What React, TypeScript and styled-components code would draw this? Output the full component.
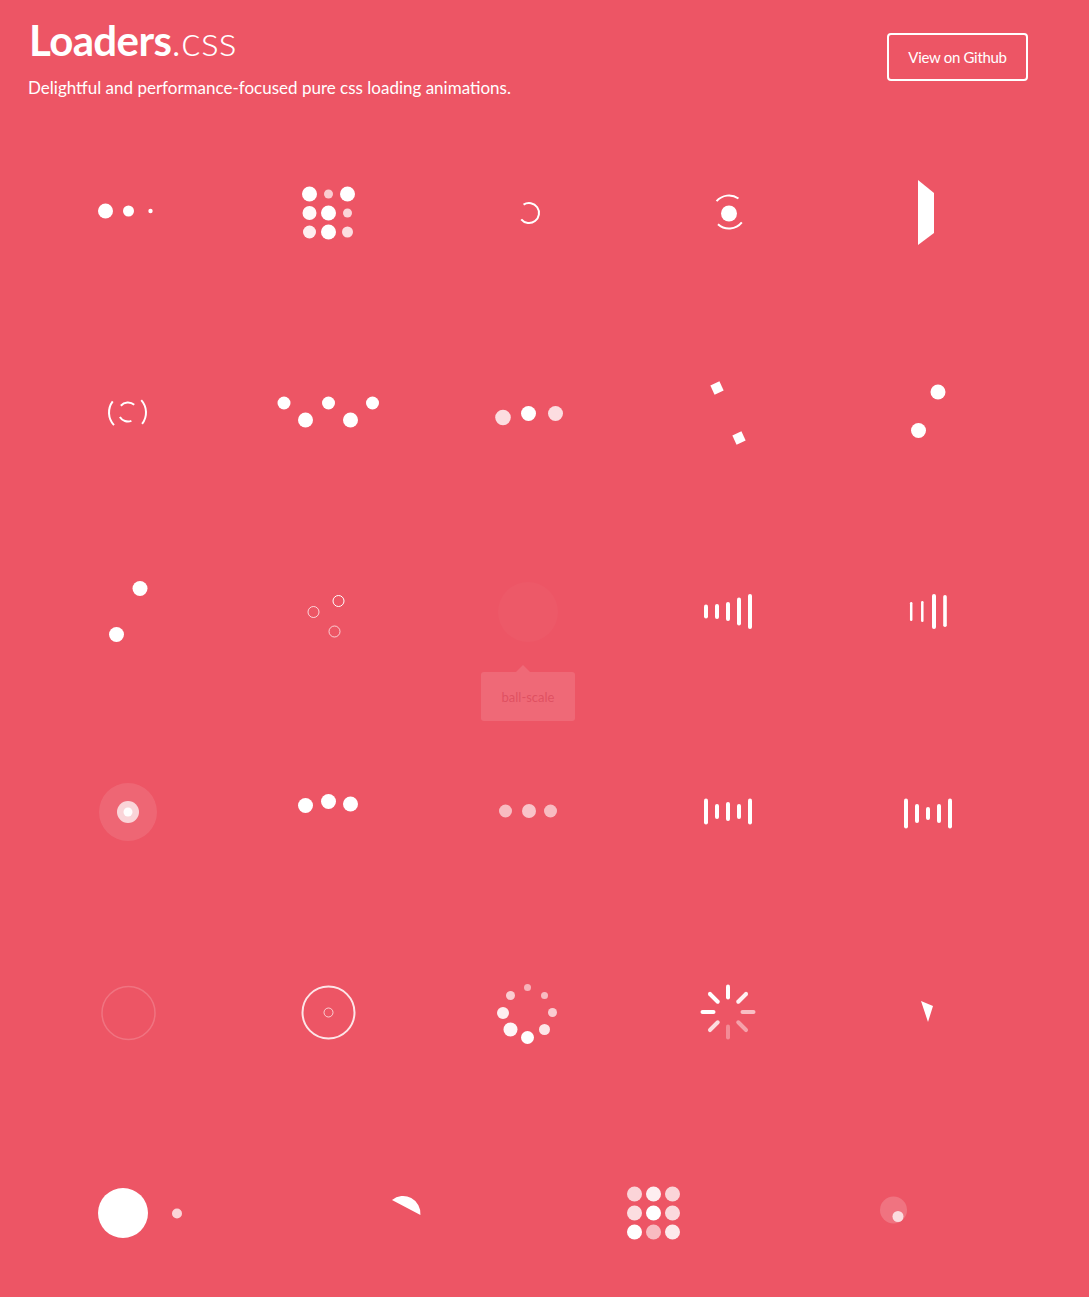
import React from 'react';
import styled, { createGlobalStyle } from 'styled-components';

const GlobalStyle = createGlobalStyle`
  html, body { margin: 0; padding: 0; }
  body {
    background: #ed5565;
    font-family: Lato, "Open Sans", "Liberation Sans", sans-serif;
    color: #fff;
  }
`;

const Page = styled.div`
  width: 1000px;
  margin-left: 28px;
`;

const Header = styled.header`
  display: flex;
  justify-content: space-between;
  align-items: flex-start;
  height: 112px;
`;

const TitleBlock = styled.div`
  padding-top: 16px;
`;

const Title = styled.h1`
  margin: 0 0 0 1px;
  font-size: 42px;
  line-height: 48px;
  font-weight: 700;
  letter-spacing: -0.6px;
`;

const TitleLight = styled.span`
  font-weight: 300;
  letter-spacing: 0;
`;

const Subtitle = styled.p`
  margin: 13px 0 0;
  font-size: 17px;
  font-weight: 400;
  letter-spacing: 0;
`;

const GithubButton = styled.a`
  margin-top: 33px;
  width: 141px;
  height: 48px;
  box-sizing: border-box;
  border: 2px solid #fff;
  border-radius: 4px;
  display: flex;
  align-items: center;
  justify-content: center;
  color: #fff;
  font-size: 15px;
  font-weight: 400;
  letter-spacing: -0.3px;
  text-decoration: none;
`;

const Grid = styled.main`
  display: flex;
  flex-wrap: wrap;
`;

const Cell = styled.div`
  flex: 1 0 20%;
  height: 200px;
  display: flex;
  align-items: center;
  justify-content: center;
  position: relative;
`;

const Drawing = styled.svg`
  width: 120px;
  height: 120px;
  overflow: visible;
`;

const Tooltip = styled.div`
  position: absolute;
  top: 160px;
  left: 50%;
  transform: translateX(-50%);
  width: 94px;
  height: 49px;
  box-sizing: border-box;
  background: rgba(255, 255, 255, 0.12);
  border-radius: 3px;
  display: flex;
  align-items: center;
  justify-content: center;
  color: rgba(210, 60, 80, 0.55);
  font-size: 13px;
  &::before {
    content: '';
    position: absolute;
    top: -7px;
    left: 35px;
    border-left: 7px solid transparent;
    border-right: 7px solid transparent;
    border-bottom: 7px solid rgba(255, 255, 255, 0.12);
  }
`;

type BallP = { x: number; y: number; r: number; o?: number };
const Ball = ({ x, y, r, o = 1 }: BallP) => <circle cx={x} cy={y} r={r} fill="#fff" fillOpacity={o} />;
const Ring = ({ x, y, r, o = 1, w = 1 }: BallP & { w?: number }) => (
  <circle cx={x} cy={y} r={r} fill="none" stroke="#fff" strokeOpacity={o} strokeWidth={w} />
);
type BarP = { x: number; h: number; w?: number; y?: number; o?: number };
const Bar = ({ x, h, w = 4, y = 0, o = 1 }: BarP) => (
  <rect x={x - w / 2} y={y - h / 2} width={w} height={h} rx={w / 2} fill="#fff" fillOpacity={o} />
);

const rad = (a: number) => (a * Math.PI) / 180;
const arc = (cx: number, cy: number, r: number, a0: number, a1: number) => {
  const x0 = cx + r * Math.cos(rad(a0));
  const y0 = cy + r * Math.sin(rad(a0));
  const x1 = cx + r * Math.cos(rad(a1));
  const y1 = cy + r * Math.sin(rad(a1));
  const large = a1 - a0 > 180 ? 1 : 0;
  return `M${x0.toFixed(2)} ${y0.toFixed(2)} A${r} ${r} 0 ${large} 1 ${x1.toFixed(2)} ${y1.toFixed(2)}`;
};
const Arc = ({ x, y, r, a0, a1, w = 2, o = 1 }: { x: number; y: number; r: number; a0: number; a1: number; w?: number; o?: number }) => (
  <path d={arc(x, y, r, a0, a1)} fill="none" stroke="#fff" strokeOpacity={o} strokeWidth={w} />
);

const Loader = ({ children }: { children: React.ReactNode }) => (
  <Drawing viewBox="-60 -60 120 120">{children}</Drawing>
);

const grid = (ops: number[][], radii?: number[][]) => {
  const xs = [-18.5, 0.5, 19.5];
  const ys = [-18, 1, 20];
  return ops.flatMap((row, i) =>
    row.map((o, j) => <Ball key={`${i}-${j}`} x={xs[j]} y={ys[i]} r={radii ? radii[i][j] : 7.5} o={o} />)
  );
};

const lineAngles = [0, 45, 90, 135, 180, 225, 270, 315];
const lineOps = [1, 0.92, 0.62, 0.45, 0.32, 0.8, 1, 1];

const loaders: { name: string; draw: React.ReactNode }[] = [
  {
    name: 'ball-pulse',
    draw: (
      <>
        <Ball x={-22.5} y={-1} r={7.5} />
        <Ball x={0.5} y={-1} r={5.5} />
        <Ball x={22.5} y={-1} r={2.2} />
      </>
    ),
  },
  {
    name: 'ball-grid-pulse',
    draw: grid(
      [
        [1, 0.7, 1],
        [0.97, 1, 0.75],
        [0.9, 1, 0.8],
      ],
      [
        [7.5, 4.5, 7.5],
        [7, 7.5, 4.5],
        [6.5, 7.5, 5.5],
      ]
    ),
  },
  {
    name: 'ball-clip-rotate',
    draw: <Arc x={1} y={1} r={10} a0={237} a1={501} w={2} />,
  },
  {
    name: 'ball-clip-rotate-pulse',
    draw: (
      <>
        <Ball x={1} y={1.5} r={8} />
        <Arc x={1} y={0} r={16.5} a0={221} a1={305} />
        <Arc x={1} y={0} r={16.5} a0={39} a1={132} />
      </>
    ),
  },
  {
    name: 'square-spin',
    draw: <polygon points="-10,-32 6,-19 6,21 -10,33" fill="#fff" />,
  },
  {
    name: 'ball-clip-rotate-multiple',
    draw: (
      <>
        <Arc x={-0.5} y={0.5} r={18.5} a0={137} a1={217} />
        <Arc x={-0.5} y={0.5} r={18.5} a0={318} a1={398} />
        <Arc x={0} y={0} r={9.5} a0={221} a1={311} />
        <Arc x={0} y={0} r={9.5} a0={69} a1={149} />
      </>
    ),
  },
  {
    name: 'ball-pulse-rise',
    draw: (
      <>
        <Ball x={-44} y={-9} r={6.5} />
        <Ball x={-22.5} y={8} r={7.5} />
        <Ball x={0.5} y={-9} r={6.5} />
        <Ball x={22.5} y={8} r={7.5} />
        <Ball x={44.5} y={-9} r={6.5} />
      </>
    ),
  },
  {
    name: 'ball-rotate',
    draw: (
      <>
        <Ball x={-25} y={5.5} r={7.8} o={0.8} />
        <Ball x={0.5} y={1.5} r={7.5} />
        <Ball x={27.5} y={1.5} r={7.5} o={0.8} />
      </>
    ),
  },
  {
    name: 'cube-transition',
    draw: (
      <>
        <rect x={-5} y={-5} width={10} height={10} fill="#fff" transform="translate(-11 -24) rotate(-25)" />
        <rect x={-5} y={-5} width={10} height={10} fill="#fff" transform="translate(11 26) rotate(-25)" />
      </>
    ),
  },
  {
    name: 'ball-zig-zag',
    draw: (
      <>
        <Ball x={10} y={-20} r={7.5} />
        <Ball x={-9.5} y={18.5} r={7.5} />
      </>
    ),
  },
  {
    name: 'ball-zig-zag-deflect',
    draw: (
      <>
        <Ball x={12} y={-23.5} r={7.5} />
        <Ball x={-11.5} y={22.5} r={7.5} />
      </>
    ),
  },
  {
    name: 'ball-triangle-path',
    draw: (
      <>
        <Ring x={-14.5} y={0} r={5.5} o={0.75} />
        <Ring x={10.5} y={-11} r={5.5} o={1} />
        <Ring x={6.5} y={19.5} r={5.5} o={0.7} />
      </>
    ),
  },
  {
    name: 'ball-scale',
    draw: <Ball x={0} y={0} r={30} o={0.025} />,
  },
  {
    name: 'line-scale',
    draw: (
      <>
        <Bar x={-22} h={14} y={-0.5} />
        <Bar x={-11} h={15} y={-0.5} />
        <Bar x={0} h={19} y={-0.5} />
        <Bar x={11} h={28} y={-0.5} />
        <Bar x={22} h={35} y={-0.5} />
      </>
    ),
  },
  {
    name: 'line-scale-party',
    draw: (
      <>
        <Bar x={-16.8} h={19} w={2.5} y={-0.5} />
        <Bar x={-5.7} h={21} w={2.5} y={-0.5} />
        <Bar x={6} h={35} y={-0.5} />
        <Bar x={17} h={32} w={3.6} y={-1} />
      </>
    ),
  },
  {
    name: 'ball-scale-multiple',
    draw: (
      <>
        <Ball x={0} y={0} r={29} o={0.1} />
        <Ball x={0} y={0} r={11} o={0.72} />
        <Ball x={0} y={0} r={4.5} o={0.95} />
      </>
    ),
  },
  {
    name: 'ball-pulse-sync',
    draw: (
      <>
        <Ball x={-22.5} y={-6.5} r={7.5} />
        <Ball x={0.5} y={-10.5} r={7.5} />
        <Ball x={22.5} y={-8} r={7.5} />
      </>
    ),
  },
  {
    name: 'ball-beat',
    draw: (
      <>
        <Ball x={-22.5} y={-1} r={6.5} o={0.6} />
        <Ball x={1} y={-1} r={7} o={0.65} />
        <Ball x={22.5} y={-1} r={6.5} o={0.6} />
      </>
    ),
  },
  {
    name: 'line-scale-pulse-out',
    draw: (
      <>
        <Bar x={-22} h={26} y={-0.5} />
        <Bar x={-11} h={15} y={-0.5} />
        <Bar x={0} h={19} y={-0.5} />
        <Bar x={11} h={15} y={-0.5} />
        <Bar x={22} h={26} y={-0.5} />
      </>
    ),
  },
  {
    name: 'line-scale-pulse-out-rapid',
    draw: (
      <>
        <Bar x={-22} h={30} y={1.5} />
        <Bar x={-11} h={19} y={1.5} />
        <Bar x={0} h={13} y={1.5} />
        <Bar x={11} h={19} y={1.5} />
        <Bar x={22} h={30} y={1.5} />
      </>
    ),
  },
  {
    name: 'ball-scale-ripple',
    draw: <Ring x={0.5} y={1} r={26.5} w={1.5} o={0.18} />,
  },
  {
    name: 'ball-scale-ripple-multiple',
    draw: (
      <>
        <Ring x={0.5} y={0.5} r={26} w={2} o={0.85} />
        <Ring x={0.5} y={0.5} r={4.5} w={1} o={0.7} />
      </>
    ),
  },
  {
    name: 'ball-spin-fade-loader',
    draw: (
      <>
        <Ball x={-0.5} y={-24.5} r={3.5} o={0.55} />
        <Ball x={16.5} y={-16.5} r={3.5} o={0.6} />
        <Ball x={24.5} y={0.5} r={4.5} o={0.7} />
        <Ball x={16.5} y={17.5} r={5.5} o={0.85} />
        <Ball x={-0.5} y={25.5} r={6.5} o={1} />
        <Ball x={-17.5} y={17.5} r={7} o={0.95} />
        <Ball x={-25} y={1} r={6} o={0.9} />
        <Ball x={-17.5} y={-16.5} r={4.5} o={0.7} />
      </>
    ),
  },
  {
    name: 'line-spin-fade-loader',
    draw: (
      <>
        {lineAngles.map((a, i) => (
          <g key={a} transform={`rotate(${a})`}>
            <Bar x={0} y={-20} h={15} w={4} o={lineOps[i]} />
          </g>
        ))}
      </>
    ),
  },
  {
    name: 'triangle-skew-spin',
    draw: <polygon points="-7,-11 5,-6 0,10" fill="#fff" />,
  },
  {
    name: 'pacman',
    draw: (
      <>
        <Ball x={-30} y={1} r={25} />
        <Ball x={24} y={1.5} r={5} o={0.75} />
      </>
    ),
  },
  {
    name: 'semi-circle-spin',
    draw: <path d={`${arc(0, 1.5, 17.5, 231, 365)} Z`} fill="#fff" />,
  },
  {
    name: 'ball-grid-beat',
    draw: grid([
      [0.75, 0.9, 0.75],
      [0.8, 1, 0.78],
      [1, 0.6, 0.88],
    ]),
  },
  {
    name: 'ball-scale-random',
    draw: (
      <>
        <Ball x={-9.5} y={-2} r={13.5} o={0.18} />
        <Ball x={-5} y={4.5} r={5.5} o={0.75} />
      </>
    ),
  },
];

export default function App() {
  return (
    <>
      <GlobalStyle />
      <Page>
        <Header>
          <TitleBlock>
            <Title>
              Loaders<TitleLight>.css</TitleLight>
            </Title>
            <Subtitle>Delightful and performance-focused pure css loading animations.</Subtitle>
          </TitleBlock>
          <GithubButton href="#">View on Github</GithubButton>
        </Header>
        <Grid>
          {loaders.map((l) => (
            <Cell key={l.name} title={l.name}>
              <Loader>{l.draw}</Loader>
              {l.name === 'ball-scale' && <Tooltip>ball-scale</Tooltip>}
            </Cell>
          ))}
        </Grid>
      </Page>
    </>
  );
}
